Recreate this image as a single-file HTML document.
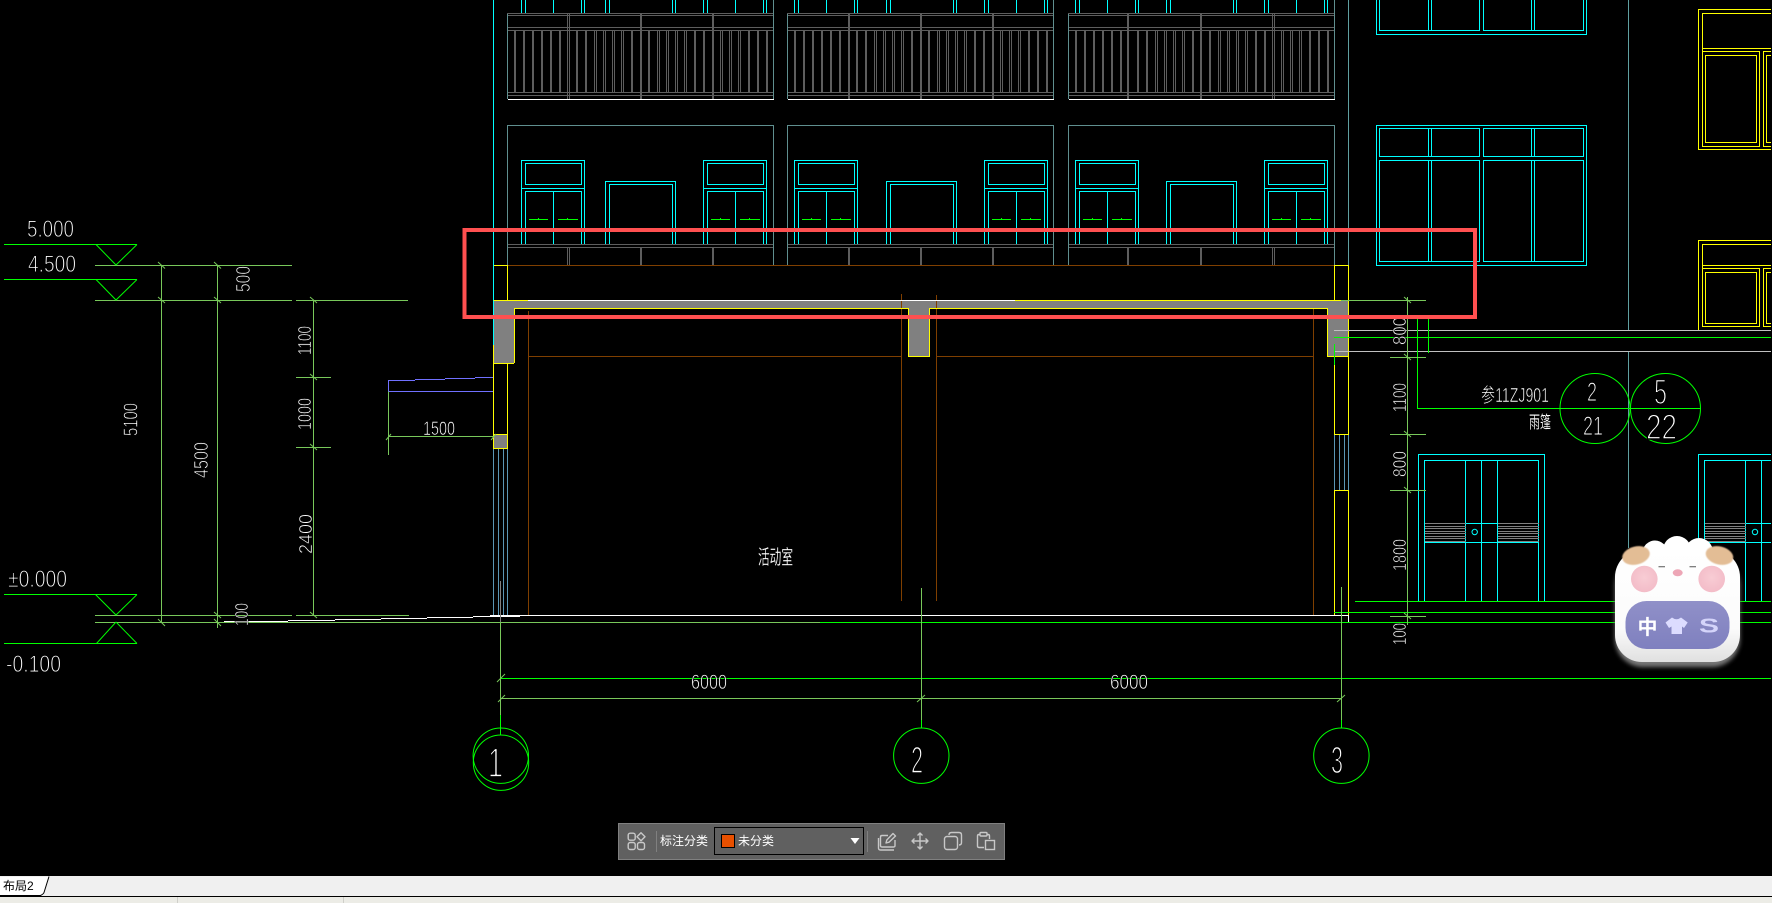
<!DOCTYPE html>
<html lang="zh">
<head>
<meta charset="utf-8">
<title>CAD</title>
<style>
html,body{margin:0;padding:0;background:#000;width:1772px;height:903px;overflow:hidden}
#w{position:relative;width:1772px;height:903px;overflow:hidden;background:#000;font-family:"Liberation Sans","Noto Sans CJK SC",sans-serif}
svg{position:absolute;left:0;top:0;display:block}
.t text{fill:#fff;stroke:#000;stroke-linejoin:round;font-family:"Liberation Sans","Noto Sans CJK SC",sans-serif}
#bar{position:absolute;left:0;top:876px;width:1772px;height:20px;background:#f0f0f0}
#line{position:absolute;left:0;top:896px;width:1772px;height:1px;background:#000}
#bot{position:absolute;left:0;top:897px;width:1772px;height:6px;background:#ecece6}
.dv{position:absolute;top:897px;width:1px;height:6px;background:#cfcfc9}
#tab{position:absolute;left:3px;top:878px;font-size:12px;line-height:16px;color:#000;letter-spacing:0}
#tb{position:absolute;left:618px;top:823px;width:385px;height:35px;background:#606060;border:1px solid #808080}
.lbl{position:absolute;color:#fff;font-size:12px;line-height:16px;white-space:nowrap}
#cb{position:absolute;left:95px;top:3px;width:148px;height:26px;border:1px solid #000}
#sw{position:absolute;left:102px;top:10px;width:12px;height:12px;background:#e85000;border:1px solid #000}
</style>
</head>
<body>
<div id="w">
<svg width="1772" height="903" viewBox="0 0 1772 903" xmlns="http://www.w3.org/2000/svg" fill="none" shape-rendering="crispEdges">
<defs>
<g id="bal">
<path stroke="#5e5e5e" stroke-width="2" d="M8 30V93M17 30V93M26 30V93M35 30V93M44 30V93M53 30V93M70 30V93M79 30V93M125 30V93M142 30V93M188 30V93M197 30V93M242 30V93M251 30V93M260 30V93"/>
<path stroke="#5e5e5e" d="M87.5 30V93M89.5 30V93M96.5 30V93M98.5 30V93M105.5 30V93M107.5 30V93M114.5 30V93M116.5 30V93M150.5 30V93M152.5 30V93M159.5 30V93M161.5 30V93M168.5 30V93M170.5 30V93M177.5 30V93M179.5 30V93M213.5 30V93M215.5 30V93M222.5 30V93M224.5 30V93M231.5 30V93M233.5 30V93"/>
<path stroke="#5e5e5e" d="M0 13.5H266M0 15.5H266M0 27.5H266M0 30.5H266M0 92.5H266M0 95.5H266M0 244.5H266M0 247.5H266"/>
<path stroke="#fff" d="M1 99.5H267"/>
<path stroke="#5f8f8f" d="M.5 14V99M.5 125V265M266.5 0V99M266.5 125V265M0 125.5H267"/>
</g>
<g id="wa">
<path stroke="#0ff" d="M.5 244V160.5H63.5V244M4.5 163.5H60.5V184.5H4.5ZM.5 188.5H63.5M4.5 244V191.5H60.5V244M32.5 191V244M.5 0V13M4.5 0V13M32.5 0V13M60.5 0V13M63.5 0V13"/>
<path stroke="#0f0" d="M8 219.5H27M37 219.5H57M17.5 218V219M46.5 218V219"/>
</g>
<g id="wb">
<path stroke="#0ff" d="M.5 244V181.5H70.5V244M4.5 244V184.5H67.5V244M.5 0V13M4.5 0V13M67.5 0V13M70.5 0V13"/>
</g>
<g id="stripes">
<path stroke="#808080" d="M0 523.5H41M0 526.5H41M0 528.5H41M0 531.5H41M0 533.5H41M0 536.5H41M0 538.5H41M0 541.5H41"/>
</g>
</defs>

<!-- bays -->
<use href="#bal" x="507"/><use href="#bal" x="787"/><use href="#bal" x="1068"/>
<path stroke="#5e5e5e" d="M567.5 13V99M569.5 13V99M567.5 247V265M569.5 247V265M1272.5 13V99M1274.5 13V99M1272.5 247V265M1274.5 247V265"/>
<path stroke="#5e5e5e" stroke-width="2" d="M641 13V99M713 13V99M849 13V99M921 13V99M993 13V99M1128 13V99M1201 13V99M641 247V265M713 247V265M849 247V265M921 247V265M993 247V265M1128 247V265M1201 247V265"/>
<use href="#wa" x="521"/><use href="#wb" x="605"/><use href="#wa" x="703"/>
<use href="#wa" x="794"/><use href="#wb" x="886"/><use href="#wa" x="984"/>
<use href="#wa" x="1075"/><use href="#wb" x="1166"/><use href="#wa" x="1264"/>

<!-- teal and main cyan -->
<path stroke="#0ff" d="M493.5 0V345"/>
<path stroke="#5f9fa0" d="M1348.5 0V300M1628.5 0V330M1628.5 351V548"/>

<!-- structure -->
<path fill="#808080" d="M494 301H1348V356H1327V308.5H930V356H908V308.5H514V363H494Z"/>
<path fill="#808080" d="M494 434H507V448H494Z"/>
<path stroke="#7f3f00" d="M507 265.5H1334M528.5 311V615M901.5 294V601M936.5 295V601M1313.5 308V615M528 356.5H901M937 356.5H1313"/>
<path stroke="#fff" d="M528 300.5H1015M1348.5 615V622M1341 622.5H1540"/>
<path stroke="#ff0" d="M494 265.5H507.5V300M493.5 300.5H528M1015 300.5H1348.5M514.5 363V308.5H908.5V356.5H929.5V308.5H1327.5V356.5H1348.5V434.5H1334.5V356M494 363.5H514M493.5 345V434.5H507.5V363M493.5 434V448.5H507.5V434M1334.5 300V265.5H1348.5V300M1348.5 300V356M1334.5 615V490.5H1348.5V615"/>
<path stroke="#5a96b4" d="M493.5 449V615M498.5 449V615M503.5 449V615M507.5 449V615M1334.5 435V490M1339.5 435V490M1344.5 435V490M1348.5 435V490"/>
<path stroke="#fff" d="M224 621.5H288M288 620.5H335M335 619.5H381M381 618.5H427M427 617.5H473M473 616.5H520M490 615.5H1348"/>

<!-- right side cyan window -->
<path stroke="#0ff" d="M1376.5 0V34.5H1586.5V0M1379.5 0V30.5H1479.5V0M1483.5 0V30.5H1583.5V0M1428.5 0V30M1431.5 0V30M1531.5 0V30M1534.5 0V30"/>
<path stroke="#0ff" d="M1376.5 125.5H1586.5V265.5H1376.5ZM1379.5 128.5H1479.5V156.5H1379.5ZM1483.5 128.5H1583.5V156.5H1483.5ZM1379.5 160.5H1479.5V261.5H1379.5ZM1483.5 160.5H1583.5V261.5H1483.5ZM1428.5 129V156M1431.5 129V156M1531.5 129V156M1534.5 129V156M1428.5 161V261M1431.5 161V261M1531.5 161V261M1534.5 161V261"/>

<!-- yellow windows right -->
<path stroke="#ff0" d="M1771 9.5H1698.5V149.5H1771M1771 13.5H1702.5V146.5H1759.5V51.5H1702.5M1702.5 48.5H1771M1705.5 55.5H1756.5V142.5H1705.5ZM1771 51.5H1763.5V146.5H1771M1771 55.5H1766.5V142.5H1771"/>
<path stroke="#ff0" d="M1771 240.5H1698.5V330M1771 244.5H1702.5V326.5H1759.5V268.5H1702.5M1702.5 265.5H1771M1705.5 272.5H1756.5V323.5H1705.5ZM1771 268.5H1763.5V326.5H1771M1771 272.5H1766.5V323.5H1771"/>

<!-- grey/green horizontals right -->
<path stroke="#c0c0c0" d="M1334 330.5H1771M1334 351.5H1771"/>
<path stroke="#0f0" d="M1334 337.5H1771M1334.5 344V365M1417.5 318V408.5H1700M1428.5 318V353M1355 601.5H1771M1334 612.5H1771M820 622.5H1771M500 678.5H1771"/>
<circle cx="1595" cy="408.5" r="35" stroke="#0f0" shape-rendering="auto"/>
<circle cx="1665.5" cy="408.5" r="35" stroke="#0f0" shape-rendering="auto"/>

<!-- doors -->
<path stroke="#0ff" d="M1418.5 601V454.5H1544.5V601M1424.5 601V460.5H1538.5V601M1465.5 461V601M1481.5 461V601M1497.5 461V601M1465.5 523.5H1497.5M1465.5 542.5H1497.5M1424.5 542.5H1465M1497 542.5H1538M1771 454.5H1698.5V601M1771 460.5H1704.5V601M1745.5 461V601M1761.5 461V601M1745.5 523.5H1771M1745.5 542.5H1771M1704.5 542.5H1745"/>
<use href="#stripes" x="1425"/><use href="#stripes" x="1498"/><use href="#stripes" x="1705"/>
<circle cx="1474.7" cy="532" r="2.7" stroke="#0ff" shape-rendering="auto"/>
<circle cx="1755" cy="532" r="2.7" stroke="#0ff" shape-rendering="auto"/>

<!-- dims left -->
<path stroke="#78c85a" d="M95 265.5H292M95 300.5H292M296 300.5H408M161.5 265V622M217.5 265V628M313.5 300V615M296 377.5H331M296 447.5H331M388.5 380V455M388 436.5H493M95 615.5H292M296 615.5H409M95 622.5H820M500.5 622V715M921.5 588V727M1341.5 587V727M500 698.5H1342M1407.5 297V625M1341 300.5H1426M1390 357.5H1426M1390 434.5H1426M1390 490.5H1426M1390 616.5H1426"/>
<path stroke="#808080" d="M500.5 581V622"/>
<path stroke="#0f0" d="M500.5 715V735M921.5 720V728M1341.5 720V728"/>
<g shape-rendering="auto" stroke="#78c85a">
<path d="M158 262L165 268.500M214 262L221 268.500M158 297L165 303M214 297L221 303M310 297L317 303M310 374L317 380M310 444L317 450M158 619L165 626M214 612L221 618M214 619L221 626M310 612L317 618M386 440L391 434M491 440L496 434M497 682L505 674M498 702L505 695M917 702L925 695M1337 702L1345 695M1404 297L1411 303M1404 354L1411 360M1404 431L1411 437M1404 487L1411 493M1404 613L1411 619"/>
</g>
<path stroke="#7070ff" d="M388.500 391.500H493M388.500 380V391M388 380.500H415M415 379.500H445M445 378.500H475M475 377.500H493"/>

<!-- level marks -->
<path stroke="#0f0" d="M4 244.500H137M4 279.500H137M4 594.500H137M4 643.500H137"/>
<path stroke="#0f0" shape-rendering="auto" d="M96 244.500L116 265L137 244.500M96 279.500L116 300L137 279.500M95.500 594.500L116 615L137 594.500M116 622L96.500 643.500M116 622L137 643.500"/>

<!-- grid circles -->
<g shape-rendering="auto" stroke="#0f0">
<circle cx="500.800" cy="755.700" r="27.700"/>
<circle cx="501" cy="762.700" r="27.700"/>
<circle cx="921.300" cy="755.700" r="27.700"/>
<circle cx="1341.400" cy="755.700" r="27.700"/>
</g>

<!-- CAD text -->
<g class="t" shape-rendering="auto">
<text x="27" y="237" font-size="24" stroke-width=".9" textLength="47" lengthAdjust="spacingAndGlyphs">5.000</text>
<text x="28" y="272" font-size="24" stroke-width=".9" textLength="48" lengthAdjust="spacingAndGlyphs">4.500</text>
<text x="8" y="587" font-size="24" stroke-width=".9" textLength="59" lengthAdjust="spacingAndGlyphs">±0.000</text>
<text x="6" y="672" font-size="24" stroke-width=".9" textLength="55" lengthAdjust="spacingAndGlyphs">-0.100</text>
<text x="423" y="435" font-size="19" stroke-width=".6" textLength="32" lengthAdjust="spacingAndGlyphs">1500</text>
<text x="691" y="689" font-size="21" stroke-width=".7" textLength="36" lengthAdjust="spacingAndGlyphs">6000</text>
<text x="1110" y="689" font-size="21" stroke-width=".7" textLength="38" lengthAdjust="spacingAndGlyphs">6000</text>
<text x="758" y="564" font-size="20" stroke-width=".15" textLength="35" lengthAdjust="spacingAndGlyphs">活动室</text>
<text x="1481" y="402" font-size="20" stroke-width=".6" textLength="68" lengthAdjust="spacingAndGlyphs">参11ZJ901</text>
<text x="1529" y="428" font-size="17" stroke-width=".1" textLength="22" lengthAdjust="spacingAndGlyphs">雨篷</text>
<text x="1587" y="401" font-size="27" stroke-width="1" textLength="10" lengthAdjust="spacingAndGlyphs">2</text>
<text x="1583" y="435" font-size="27" stroke-width="1" textLength="20" lengthAdjust="spacingAndGlyphs">21</text>
<text x="1654" y="404" font-size="35" stroke-width="1.500" textLength="13" lengthAdjust="spacingAndGlyphs">5</text>
<text x="1646" y="439" font-size="35" stroke-width="1.500" textLength="31" lengthAdjust="spacingAndGlyphs">22</text>
<text x="488" y="777" font-size="42" stroke-width="1.700" textLength="15" lengthAdjust="spacingAndGlyphs">1</text>
<text x="911" y="773" font-size="38" stroke-width="1.500" textLength="12" lengthAdjust="spacingAndGlyphs">2</text>
<text x="1331" y="773" font-size="38" stroke-width="1.500" textLength="12" lengthAdjust="spacingAndGlyphs">3</text>
<text transform="translate(250,292) rotate(-90)" font-size="20" stroke-width=".7" textLength="26" lengthAdjust="spacingAndGlyphs">500</text>
<text transform="translate(137.500,436) rotate(-90)" font-size="20" stroke-width=".7" textLength="33" lengthAdjust="spacingAndGlyphs">5100</text>
<text transform="translate(208,478) rotate(-90)" font-size="20" stroke-width=".7" textLength="36" lengthAdjust="spacingAndGlyphs">4500</text>
<text transform="translate(311,355) rotate(-90)" font-size="18" stroke-width=".6" textLength="29" lengthAdjust="spacingAndGlyphs">1100</text>
<text transform="translate(311,430) rotate(-90)" font-size="18" stroke-width=".6" textLength="32" lengthAdjust="spacingAndGlyphs">1000</text>
<text transform="translate(312,554) rotate(-90)" font-size="18" stroke-width=".6" textLength="40" lengthAdjust="spacingAndGlyphs">2400</text>
<text transform="translate(248,626) rotate(-90)" font-size="18" stroke-width=".6" textLength="23" lengthAdjust="spacingAndGlyphs">100</text>
<text transform="translate(1406,345) rotate(-90)" font-size="18" stroke-width=".6" textLength="28" lengthAdjust="spacingAndGlyphs">800</text>
<text transform="translate(1406,412) rotate(-90)" font-size="18" stroke-width=".6" textLength="29" lengthAdjust="spacingAndGlyphs">1100</text>
<text transform="translate(1406,477) rotate(-90)" font-size="18" stroke-width=".6" textLength="26" lengthAdjust="spacingAndGlyphs">800</text>
<text transform="translate(1406,571) rotate(-90)" font-size="18" stroke-width=".6" textLength="32" lengthAdjust="spacingAndGlyphs">1800</text>
<text transform="translate(1406,645) rotate(-90)" font-size="18" stroke-width=".6" textLength="22" lengthAdjust="spacingAndGlyphs">100</text>
</g>

<!-- red box -->
<rect x="464.500" y="230" width="1010.500" height="87" stroke="#ff5050" stroke-width="4"/>

<!-- sheep badge -->
<defs>
<linearGradient id="bg" x1="0" y1="0" x2="0" y2="1">
<stop offset="0" stop-color="#fff"/><stop offset=".7" stop-color="#fbfbfb"/><stop offset="1" stop-color="#e0e0e0"/>
</linearGradient>
<linearGradient id="pg" x1="0" y1="0" x2="0" y2="1">
<stop offset="0" stop-color="#9090c8"/><stop offset="1" stop-color="#7f80bf"/>
</linearGradient>
<filter id="bl" x="-20%" y="-20%" width="140%" height="140%"><feGaussianBlur stdDeviation="2"/></filter>
<filter id="bs" x="-20%" y="-20%" width="140%" height="140%"><feGaussianBlur stdDeviation=".5"/></filter>
<radialGradient id="cheek" cx=".5" cy=".45" r=".55">
<stop offset="0" stop-color="#f8ccd4"/><stop offset="1" stop-color="#f3bcc8"/>
</radialGradient>
</defs>
<g shape-rendering="auto">
<rect x="1615" y="558" width="125" height="109" rx="28" fill="#777" filter="url(#bl)"/>
<circle cx="1655" cy="553" r="12.500" fill="#fff"/>
<circle cx="1677" cy="550" r="14" fill="#fff"/>
<circle cx="1699" cy="552" r="14" fill="#fff"/>
<rect x="1615" y="550" width="125" height="112" rx="27" fill="url(#bg)"/>
<ellipse cx="1636" cy="555.500" rx="14" ry="9" fill="#e3bd95" transform="rotate(-14 1636 555.500)" filter="url(#bs)"/>
<ellipse cx="1719.500" cy="555.500" rx="14" ry="9" fill="#e3bd95" transform="rotate(14 1719.500 555.500)" filter="url(#bs)"/>
<circle cx="1644.300" cy="579" r="13.300" fill="url(#cheek)"/>
<circle cx="1711.700" cy="579" r="13.300" fill="url(#cheek)"/>
<ellipse cx="1677.700" cy="572.800" rx="5" ry="3.500" fill="#eda6b6"/>
<path stroke="#555" stroke-width="1" d="M1658.500 566.700H1665M1689.500 566.700H1696"/>
<rect x="1625.500" y="601" width="104" height="48" rx="21" fill="url(#pg)"/>
<text x="1637.500" y="634" font-size="20" font-weight="700" fill="#fff" font-family="'Noto Sans CJK SC',sans-serif">中</text>
<path fill="#dcdcff" d="M1672 617.500L1665.500 622.500L1669 628L1671.500 626.500V634H1682V626.500L1684 628L1687.700 622.500L1681 617.500Q1676.500 621 1672 617.500Z"/>
<text x="1699" y="632.500" font-size="20" font-weight="700" fill="#d4d4fa" textLength="20" lengthAdjust="spacingAndGlyphs">S</text>
</g>
</svg>

<!-- toolbar -->
<div id="tb">
<div class="lbl" style="left:41px;top:9px;">标注分类</div>
<div id="cb"></div>
<div id="sw"></div>
<div class="lbl" style="left:119px;top:9px;">未分类</div>
<svg width="385" height="35" viewBox="619 824 385 35" style="left:0;top:0" fill="none">
<path stroke="#808080" d="M656.500 831V852M867.500 831V852"/>
<path fill="#fff" d="M850.500 838H859.500L855 844Z"/>
<g stroke="#c8c8c8" stroke-width="1.400">
<rect x="628.200" y="842.500" width="7" height="7" rx="2"/>
<rect x="637.500" y="842.500" width="7" height="7" rx="2"/>
<rect x="628.200" y="833.200" width="7" height="7" rx="2"/>
<path d="M641 832.800L645 836.800L641 840.800L637 836.800Z" stroke-linejoin="round"/>
<path d="M878.500 838V848Q878.500 850 880.500 850H894M888 835.500H882Q880.500 835.500 880.500 837V845.500Q880.500 847 882 847H893.500Q895 847 895 845.500V840M886 843L886.800 840L893 833.500L895.500 836L889 842.200Z" stroke-linejoin="round"/>
<path d="M912.500 841H927.500M920 833.500V848.500M914.500 838.500L912 841L914.500 843.500M925.500 838.500L928 841L925.500 843.500M917.500 835.500L920 833L922.500 835.500M917.500 846.500L920 849L922.500 846.500" stroke-linejoin="round"/>
<path d="M949 835V835Q949 832.500 951.500 832.500H959Q961.500 832.500 961.500 835V842.500Q961.500 845 959 845"/>
<rect x="944.500" y="836.500" width="13" height="13" rx="2.500"/>
<path d="M980 834.500H979Q977.500 834.500 977.500 836V846Q977.500 847.500 979 847.500H984M987 834.500H988Q989.500 834.500 989.500 836V839"/>
<rect x="980" y="832.500" width="7" height="3.500" rx="1"/>
<rect x="985.500" y="840.500" width="9" height="9"/>
</g>
</svg>
</div>

<!-- bottom bar -->
<div id="bar"></div>
<svg width="60" height="30" viewBox="0 870 60 30" style="left:0;top:870px" fill="none">
<path fill="#fff" d="M0 877H49L44 892.500Q43.500 894 41 895H0Z"/>
<path stroke="#000" d="M49 876.500L44 892.500Q43.500 894 40.500 895.500H0"/>
</svg>
<div id="tab">布局2</div>
<div id="line"></div>
<div id="bot"></div>
<div class="dv" style="left:177px"></div>
<div class="dv" style="left:343px"></div>
</div>
</body>
</html>
